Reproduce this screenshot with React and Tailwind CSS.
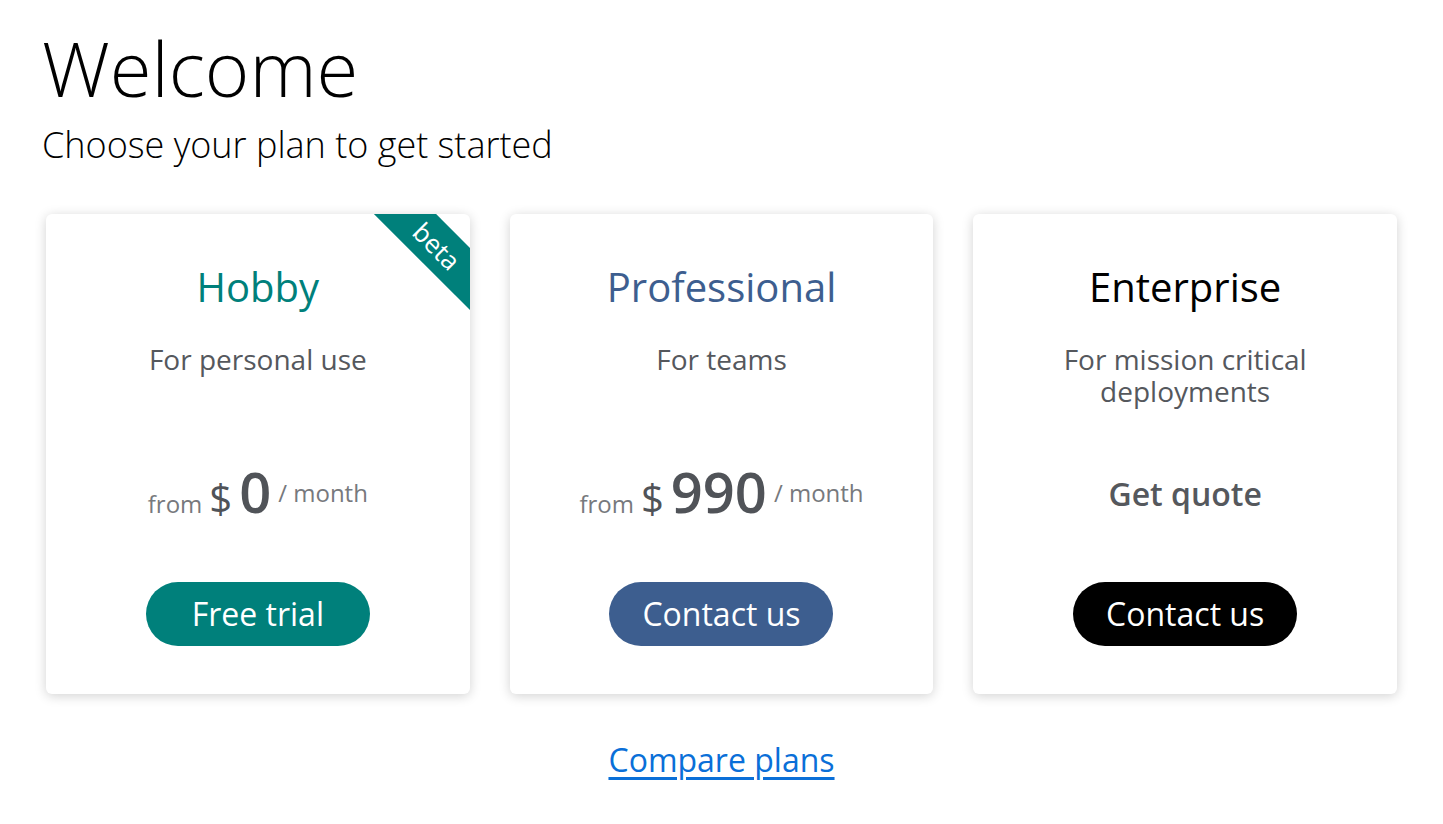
const PLANS = [
  {
    name: 'Hobby',
    nameColor: 'text-[#00807b]',
    desc: 'For personal use',
    price: '0',
    button: 'Free trial',
    buttonColor: 'bg-[#00807b]',
    beta: true,
  },
  {
    name: 'Professional',
    nameColor: 'text-[#3d5e8f]',
    desc: 'For teams',
    price: '990',
    button: 'Contact us',
    buttonColor: 'bg-[#3d5e8f]',
  },
  {
    name: 'Enterprise',
    nameColor: 'text-black',
    desc: 'For mission critical deployments',
    price: null,
    button: 'Contact us',
    buttonColor: 'bg-black',
  },
];

/* corner ribbon on the hobby card */
function Ribbon() {
  return (
    <div className="absolute right-[-67px] top-[10px] flex h-[44px] w-[200px] rotate-45 items-center justify-center bg-[#00807b] text-[26px] leading-none text-white">
      beta
    </div>
  );
}

function Price({ value }) {
  if (value === null) {
    return (
      <div className="flex h-[56px] justify-center">
        <span className="mt-[15px] text-[32px] font-semibold leading-none text-[#55585d]">Get quote</span>
      </div>
    );
  }
  return (
    <div className="flex h-[56px] items-baseline justify-center">
      <span className="mr-[7px] text-[24px] leading-none text-[#77797d]">from</span>
      <span className="mr-[7px] text-[40px] leading-none text-[#505358]">$</span>
      <span className="mr-[7px] text-[56px] font-semibold leading-none text-[#505358]">{value}</span>
      <span className="mt-[18px] self-start text-[24px] leading-none text-[#77797d]">/ month</span>
    </div>
  );
}

function PlanCard({ plan }) {
  return (
    <div className="relative flex flex-col items-center overflow-hidden rounded-[6px] bg-white px-6 pb-[48px] pt-[49px] text-center shadow-[0_2px_12px_rgba(0,0,0,0.18)]">
      {plan.beta && <Ribbon />}
      <h2 className={`text-[40px] leading-[48px] ${plan.nameColor}`}>{plan.name}</h2>
      <p className="mt-[32px] h-[64px] max-w-[260px] text-[28px] leading-[32px] text-[#55585d]">{plan.desc}</p>
      <div className="mt-[56px] w-full">
        <Price value={plan.price} />
      </div>
      <button
        type="button"
        className={`mt-[63px] h-[64px] w-[224px] rounded-full text-[32px] text-white ${plan.buttonColor}`}
      >
        {plan.button}
      </button>
    </div>
  );
}

export default function App() {
  return (
    <div className="min-h-screen bg-white font-['Open_Sans',sans-serif] text-black">
      <header className="px-[42px] pt-[30px]">
        <h1 className="text-[76px] font-light leading-none">Welcome</h1>
        <p className="mt-[21px] text-[36px] font-light leading-none">Choose your plan to get started</p>
      </header>

      <main className="mt-[51px] grid grid-cols-3 gap-[40px] px-[46px]">
        {PLANS.map((p) => (
          <PlanCard key={p.name} plan={p} />
        ))}
      </main>

      <div className="mt-[50px] flex justify-center">
        <a href="#" className="text-[32px] leading-none text-[#0a6fd8] underline underline-offset-[5px]">
          Compare plans
        </a>
      </div>
    </div>
  );
}
